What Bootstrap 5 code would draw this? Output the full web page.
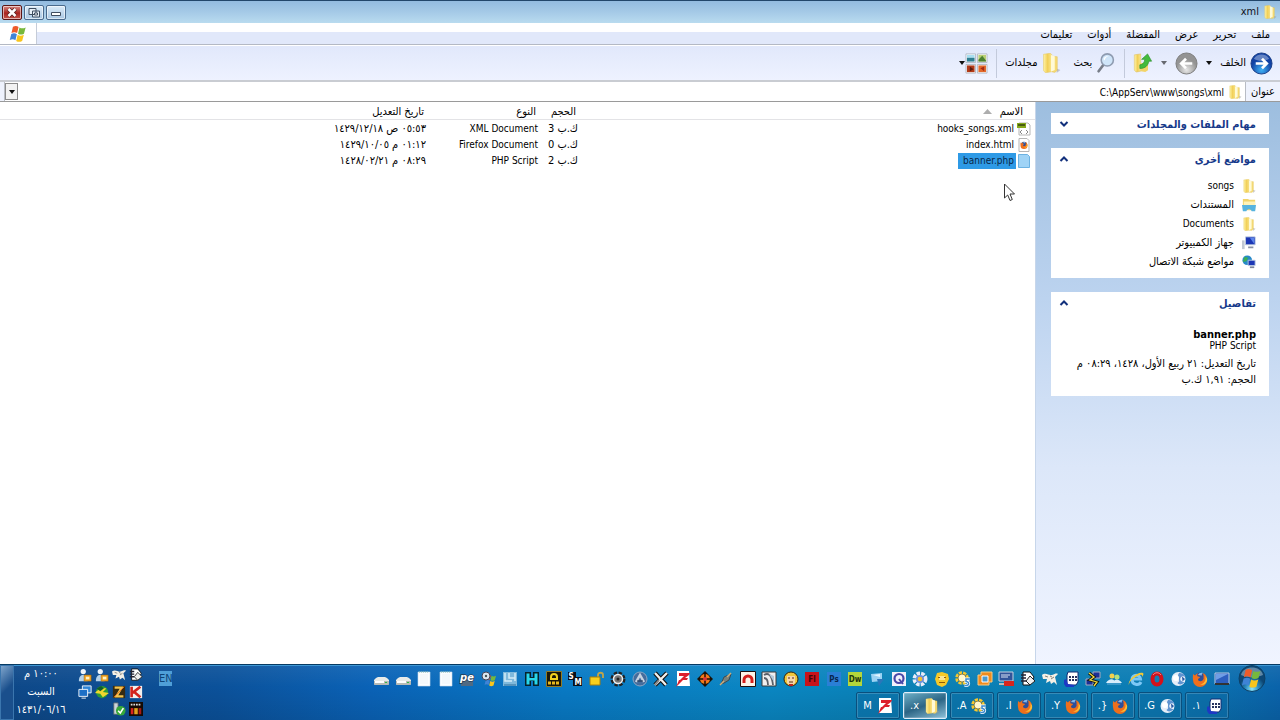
<!DOCTYPE html>
<html lang="ar" dir="rtl">
<head>
<meta charset="utf-8">
<meta name="viewport" content="width=device-width, initial-scale=1">
<title>xml</title>
<link rel="stylesheet" href="https://cdn.jsdelivr.net/npm/bootstrap@5.3.0/dist/css/bootstrap.min.css">
<style>
body{font-family:"DejaVu Sans Condensed","DejaVu Sans",sans-serif;font-stretch:condensed;font-size:11px;line-height:16px;color:#000;background:#fff}
svg{flex:none;display:block}
button{font:inherit;color:inherit;background:none;border:0;padding:0}
.en{font-size:10px}
.i12{width:12px;height:12px}.i14{width:14px;height:14px}.i16{width:16px;height:16px}.i18{width:18px;height:18px}.i20{width:20px;height:20px}.i24{width:23px;height:23px}
.titlebar{height:23px;border-top:1px solid #22466b;background:linear-gradient(#93bbe0,#a3c8e6 45%,#b9dbef);padding:0 3px 0 2px}
.titlebar h1{font-size:11px;line-height:16px;margin:0;color:#112}
.wbtn{width:20px;height:15px;border:1px solid #4a6a8c;border-radius:2px;background:linear-gradient(#dcebf8,#a9c8e4);box-shadow:inset 0 0 0 1px #ffffff90}
.wbtn.close-x{background:linear-gradient(#d98a84,#a8241f 55%,#c4564c);border-color:#5c1616}
.wbtns{gap:2px}
.menubar{height:22px;background:linear-gradient(#fff 9px,#e1e8fa 9px);border-bottom:1px solid #b4b9c4}
.menubar a{color:#000;text-decoration:none;padding:4px 0 0}
.menubar nav{gap:15px;padding-right:10px}
.flagcell{width:37px;background:#fff;border-right:1px solid #c5ccd8}
.tools{height:35px;background:linear-gradient(#e1e8fb,#eef2ff);border-top:1px solid #fff;padding:0 7px 0 0}
.tools button{display:flex;align-items:center}
.vr-line{width:1px;height:29px;background:#c3cadb}
.caret{width:0;height:0;border:3px solid transparent;border-top:4px solid #111;border-bottom:0}
.caret.dim{opacity:.6}
.addr{height:22px;border-top:2px solid #c9ccd2;border-bottom:1px solid #9a9a9a;background:#eef2fd;padding-left:4px}
.addr label{width:34px;text-align:center;padding-top:2px}
.addr .field{border:1px solid #b8bcc4;border-width:0 1px;background:#fff;padding-right:3px}
.addr input{border:0;outline:0;min-width:0;padding:2px 0 0;direction:rtl;font-size:10px;color:#000}
.dropb{width:13px;height:17px;border:1px solid #8b8b8b;background:#f2f2f2}
.files{table-layout:fixed;border-collapse:collapse}
.files th{font-weight:400;line-height:15px;padding:2px 6px 0 0;border-bottom:1px solid #e3e3e6}
.files td{height:16px;padding:0 4px 0 0;white-space:nowrap}
.files tbody::before{content:"";display:block;height:1px}
.fname{gap:1px}
.fname span{padding:0 2px 0 5px}
.picked span{background:#2e9ae6;color:#0b2748}
.side{width:245px;border-left:1px solid #c7d6ea;background:linear-gradient(#9dbedf,#bcd3ef 35%,#dce7f9 65%,#f0f4ff);padding:11px 11px 11px 15px;gap:14px}
.pane{background:#fff;padding:0 13px 0 7px}
.pane h2{font-size:11px;line-height:18px;padding-top:3px;font-weight:700;color:#173a8a;margin:0}
.pane ul{margin:0;padding:7px 0}
.pane li{height:19px;display:flex;align-items:center;gap:8px}
.pane a{color:#000;text-decoration:none}
.kind{line-height:12px}
.taskbar{height:56px;border-top:1px solid #063a63;box-shadow:inset 0 1px #3f97d4;background:linear-gradient(#ffffff10,#0000 40%,#00000018),linear-gradient(90deg,#0e4888,#0b519a 17%,#0a62b6 29%,#0879c4 44%,#0a86c2 60%,#0a80b4 72%,#0b7cb4 90%,#0a63aa);color:#fff}
.startcell{width:50px;padding:0 14px 0 0}
.quick{width:857px;height:27px}
.jobs{gap:3px;padding-right:1px}
.jobs button{width:44px;height:27px;border:1px solid #0a4f7d;box-shadow:inset 0 0 0 1px #ffffff2e;background:#0b6aa280;border-radius:2px;display:flex;align-items:center;justify-content:center;gap:5px}
.jobs .now{border-color:#dfeefa;background:linear-gradient(160deg,#6db0c8,#2c6585 50%,#8fc2da)}
.lang{width:13px;height:15px;background:#4f9fd8;color:#0d4377;line-height:15px;overflow:hidden;direction:ltr;margin-top:6px}
.tray{display:grid;grid-template-columns:repeat(4,14px);gap:3px;direction:ltr;padding-top:3px}
.clock{width:54px;line-height:18px;text-align:center;margin-right:10px}
.peek{width:14px;border:1px solid #3b76ae;background:linear-gradient(135deg,#7fa5cc,#1a4f8c 45%)}
.pointer{position:absolute;left:1003px;top:183px}
</style>
</head>
<body class="d-flex flex-column min-vh-100">
<svg width="0" height="0" class="position-absolute" aria-hidden="true">
<defs>
<linearGradient id="gy" x2="1"><stop stop-color="#fff3a6"/><stop offset=".5" stop-color="#f1cf57"/><stop offset="1" stop-color="#fbe68c"/></linearGradient>
<radialGradient id="gb" cy=".8"><stop stop-color="#3fb2f5"/><stop offset="1" stop-color="#1242a4"/></radialGradient>
<radialGradient id="gg" cy=".8"><stop stop-color="#e8e8e8"/><stop offset="1" stop-color="#939393"/></radialGradient>
<radialGradient id="go" cy=".9"><stop stop-color="#8fe8fb"/><stop offset=".5" stop-color="#2b8cbf"/><stop offset="1" stop-color="#0d4775"/></radialGradient>
<symbol id="folder" viewBox="0 0 16 16"><path d="M2 1l5.500-.8 1 1V15l-5 .8L2 14z" fill="url(#gy)" stroke="#e3c45c" stroke-width=".4"/><path d="M8.500 2.500l4.500.5v11l-2 1.500L8.500 15z" fill="#f5da74" stroke="#e0bf55" stroke-width=".4"/><path d="M8 1.500l3 1v11L8 15z" fill="#fffad6"/><path d="M13 12.500l2.500 1-3 2.500z" fill="#999" opacity=".5"/></symbol>
<symbol id="flag" viewBox="0 0 16 16"><path d="M3.500 1.500c2-1 3.500-.8 5 .2L7.200 7.200c-1.500-1-3-1.200-5-.2z" fill="#ee5b2a"/><path d="M9.300 2.200c1.700 1 3.400 1 5.500 0L13.300 7.700c-2 1-3.700 1-5.300 0z" fill="#77b83c"/><path d="M2 8c2-1 3.500-.8 5 .2l-1.300 5.300c-1.500-1-3-1.200-5-.2z" fill="#3f83d6"/><path d="M7.700 8.700c1.700 1 3.400 1 5.500 0L11.700 14.200c-2 1-3.700 1-5.300 0z" fill="#f8c51c"/></symbol>
<symbol id="ff" viewBox="0 0 16 16"><circle cx="8" cy="7.500" r="6" fill="#2d4f9a"/><path d="M6 4c1-2 3-2.500 5-2-1 .5-1.500 1.500-1 2.500z" fill="#7fb8ea"/><path d="M1 3l2 1.500C4 3 5 2.500 6 2.500c-1 1-1 2-.5 2.700L8 6c0 1-2 1.500-2 2.500 0 1.500 2 2 3.500 1.500C11 9.500 12 8 11.500 6 12 4.500 11 3 10.500 2c3 1 5 4 4.500 7a7 7 0 0 1-14 0C.6 7 1 5 1 3z" fill="#ee6f1c"/><path d="M13 5c2 4-1 8-5 8.500 5 1.500 8-3 7-6z" fill="#f9bf35"/></symbol>
<symbol id="sea" viewBox="0 0 16 16"><circle cx="7.500" cy="8" r="7" fill="#e6eef8"/><path d="M8 2c4-.5 6 2 6.500 4-2-1-4-1-5 1s1 4 4 4c-2 3-6 3-7 1 2-1 2-3 1-4s-1-4 .5-6z" fill="#5f93d0"/><circle cx="5" cy="7" r="3" fill="#fff"/><path d="M11 5.500l3 2.500-2.500 2.500z" fill="#2b5ba5"/></symbol>
<symbol id="keypad" viewBox="0 0 16 16"><path d="M5 1h10v10l-2 3H4V4z" fill="#fff" stroke="#112a72"/><path d="M6 5h2v2H6zm3 0h2v2H9zm3 0h2v2h-2zM6 8h2v2H6zm3 0h2v2H9zm3 0h2v2h-2z" fill="#27335e"/><path d="M1 9l2-1 2 5 6 1v2H3l-2-3z" fill="#1c39c4"/></symbol>
<symbol id="gear5" viewBox="0 0 16 16"><circle cx="7" cy="7" r="5" fill="none" stroke="#f6c82f" stroke-width="3.500" stroke-dasharray="3 1"/><circle cx="7" cy="7" r="4" fill="#fff7ce" stroke="#6b5510" stroke-width=".7"/><path d="M15 8h-4v2.500c3 0 4 4 0 4H9.500" fill="none" stroke="#fff" stroke-width="3"/><path d="M15 8h-4v2.500c3 0 4 4 0 4H9.500" fill="none" stroke="#3a8bd0" stroke-width="1.500"/></symbol>
<symbol id="fz" viewBox="0 0 16 16"><path d="M2 0h12l1 15H2z" fill="#fff"/><path d="M4 2h11l-1 2-4 3h3l-1 2H8L1 16l3-7h1l4-4H4z" fill="#dc1f2c"/></symbol>
<symbol id="drive" viewBox="0 0 16 16"><path d="M3 7l2-1h7l2 1 2 2v4l-1 1H2l-1-1V9z" fill="#e9ebe8"/><path d="M1 10h15v3l-1 1H2l-1-1z" fill="#b8bbb6"/><path d="M2 10h9v2H2z" fill="#fff"/><path d="M12 11h2v1h-2z" fill="#3b4"/></symbol>
<symbol id="page" viewBox="0 0 16 16"><path d="M2 1h12v14H2z" fill="#fbfdff" stroke="#cdddec" stroke-width=".6"/><path d="M4 4h8M4 6h8M4 8h8M4 10h8M4 12h8" stroke="#e8eef5" stroke-width=".7"/><path d="M3 1h10" stroke="#8ba" stroke-dasharray="1 1"/></symbol>
<symbol id="gearb" viewBox="0 0 16 16"><circle cx="8" cy="8" r="5.500" fill="none" stroke="#222" stroke-width="4" stroke-dasharray="3 1.300"/><circle cx="8" cy="8" r="4.500" fill="#777" stroke="#eee" stroke-width="1.500"/><circle cx="8" cy="8" r="1.500" fill="#222"/></symbol>
<symbol id="note" viewBox="0 0 16 16"><path d="M3 1h7l4 5-4 8H3z" fill="#fff" stroke="#111"/><path d="M1 4h5M1 7h5M1 10h5" stroke="#223" stroke-width="1.500"/><path d="M10 5l5 5-5 4-4-4z" fill="#eee" stroke="#222"/></symbol>
<symbol id="fish" viewBox="0 0 16 16"><path d="M0 4c4-3 7 1 10 0s4-2 6-1l-3 3 2 8-3-3-3 2-1-3-4 2 1-4-4 0z" fill="#f4f0e6"/><path d="M3 5l3 1M9 8l3-2M8 5l2 1" stroke="#88837a"/></symbol>
<symbol id="man" viewBox="0 0 16 16"><circle cx="6" cy="4" r="3" fill="#eef5fb"/><path d="M1 15c0-5 2-7 5-7s5 2 5 7z" fill="#b4d2ea"/><path d="M7 8h8v7H7z" fill="#f0a627" stroke="#9c5d08" stroke-width=".6"/><path d="M9 10h4v3H9z" fill="#fff1c4"/></symbol>
<symbol id="mon" viewBox="0 0 16 16"><path d="M4 1h11v9H4z" fill="#1c37b5" stroke="#b9c8df"/><path d="M9 2h5v7z" fill="#5c84ea"/><path d="M7 12h6v2H7z" fill="#8a93a5"/><path d="M0 5h3v10H0z" fill="#c1c8d3"/></symbol>
<symbol id="net" viewBox="0 0 16 16"><circle cx="6" cy="6" r="5.500" fill="#2789c9"/><path d="M3 2l4 1-2 4-4 1zM7 6l3 2-2 3z" fill="#3caf54"/><path d="M7 6h8v6H7z" fill="#1c37b5" stroke="#bccbe2"/><path d="M9 13h5v2H9z" fill="#7d879b"/></symbol>
</defs>
</svg>

<header class="titlebar d-flex align-items-center justify-content-between">
  <div class="d-flex align-items-center gap-1"><svg class="i14"><use href="#folder"/></svg><h1>xml</h1></div>
  <div class="wbtns d-flex" dir="ltr">
    <button class="wbtn close-x" aria-label="إغلاق"><svg width="18" height="13" viewBox="0 0 18 13"><path d="M5.500 3l7 7m0-7l-7 7" stroke="#522" stroke-width="4"/><path d="M5.500 3l7 7m0-7l-7 7" stroke="#fff" stroke-width="2.500"/></svg></button>
    <button class="wbtn" aria-label="استعادة"><svg width="18" height="13" viewBox="0 0 18 13"><path d="M4 2.500h7v6H4zM7.500 5h7v6h-7z" fill="#e8f0f8" stroke="#3f4d60"/><path d="M9.500 7h3v2h-3z" fill="#fff" stroke="#3f4d60"/></svg></button>
    <button class="wbtn" aria-label="تصغير"><svg width="18" height="13" viewBox="0 0 18 13"><path d="M4.500 6.500h9v3h-9z" fill="#fff" stroke="#3f4d60"/></svg></button>
  </div>
</header>

<div class="menubar d-flex justify-content-between">
  <nav class="d-flex"><a href="#">ملف</a><a href="#">تحرير</a><a href="#">عرض</a><a href="#">المفضلة</a><a href="#">أدوات</a><a href="#">تعليمات</a></nav>
  <div class="flagcell d-flex align-items-center justify-content-center"><svg class="i18"><use href="#flag"/></svg></div>
</div>

<div class="tools d-flex align-items-center gap-2">
  <button class="gap-1"><svg class="i24" viewBox="0 0 24 24"><circle cx="12" cy="12" r="11" fill="url(#gb)" stroke="#1b3f86"/><path d="M4 7c3-6 13-6 16 0-5 3-11 3-16 0z" fill="#fff" opacity=".35"/><path d="M6 12h11M12.500 7l5 5-5 5" fill="none" stroke="#fff" stroke-width="2.800"/></svg>الخلف</button>
  <span class="caret"></span>
  <button aria-label="الأمام"><svg class="i24" viewBox="0 0 24 24"><circle cx="12" cy="12" r="11" fill="url(#gg)" stroke="#7c7c7c"/><path d="M18 12H7M11.500 7l-5 5 5 5" fill="none" stroke="#fff" stroke-width="2.800"/></svg></button>
  <span class="caret dim"></span>
  <button aria-label="أعلى"><svg class="i20" viewBox="2 1 21 22"><path d="M3 3l7-1v19l-5 1-2-2z" fill="url(#gy)" stroke="#dcb94d" stroke-width=".5"/><path d="M10 12h8v8l-3 2-5-1z" fill="#f3d467"/><path d="M9 14c3 0 5-2 5.500-6L11 8l6.500-6L22 10h-3c-1 5-4 8-10 8z" fill="#43bb3d" stroke="#2a8f2c" stroke-width=".7"/></svg></button>
  <span class="vr-line"></span>
  <button class="gap-1"><svg class="i20" viewBox="2 1 21 23"><path d="M10 14l-6 8" stroke="#777d88" stroke-width="3" stroke-linecap="round"/><circle cx="14" cy="9" r="7" fill="#cfe5f9" stroke="#8e9bb0" stroke-width="1.800"/><path d="M9.500 8c1-3 4-4 6-3.500-3 1-4 3-4.500 5z" fill="#fff"/></svg>بحث</button>
  <button class="gap-1 me-1"><svg class="i20"><use href="#folder"/></svg>مجلدات</button>
  <span class="vr-line"></span>
  <button aria-label="طرق العرض"><svg class="i24" viewBox="0 0 24 24"><path d="M1 2h10v9H1zM13 2h10v9H13zM1 13h10v9H1zM13 13h10v9H13z" fill="#fff" stroke="#a6adb8" stroke-width=".8"/><path d="M2 3h8v3H2z" fill="#a9dff2"/><path d="M2 6h8v4H2z" fill="#2f7f92"/><path d="M14 3h8v7h-8z" fill="#b9cf74"/><path d="M14 8l4-4 4 5v1h-8z" fill="#4c8132"/><path d="M2 14h8v7H2z" fill="#b23a18"/><path d="M5 15l4 3-4 2z" fill="#5b1d10"/><path d="M14 14h8v7h-8z" fill="#e3692b"/><path d="M16 17l4-2v5z" fill="#a52a16"/></svg><span class="caret"></span></button>
</div>

<div class="addr d-flex">
  <label for="path">عنوان</label>
  <div class="field d-flex flex-fill align-items-center">
    <svg class="i14"><use href="#folder"/></svg>
    <input id="path" class="flex-fill pe-1" value="C:\AppServ\www\songs\xml">
    <button class="dropb d-flex align-items-center justify-content-center" aria-label="القائمة"><span class="caret"></span></button>
  </div>
</div>

<main class="d-flex flex-fill">
  <aside class="side d-flex flex-column flex-shrink-0">
    <section class="pane"><div class="d-flex justify-content-between align-items-center"><h2>مهام الملفات والمجلدات</h2><svg class="i12" viewBox="0 0 12 12"><path d="M2.500 4L6 7.500 9.500 4" fill="none" stroke="#12307c" stroke-width="2"/></svg></div></section>
    <section class="pane">
      <div class="d-flex justify-content-between align-items-center"><h2>مواضع أخرى</h2><svg class="i12" viewBox="0 0 12 12"><path d="M2.500 8L6 4.500 9.500 8" fill="none" stroke="#12307c" stroke-width="2"/></svg></div>
      <ul class="list-unstyled">
        <li><svg class="i14"><use href="#folder"/></svg><a href="#" class="en">songs</a></li>
        <li><svg class="i14" viewBox="0 0 16 16"><path d="M1 1h6l1 1h7v12H1z" fill="#f0d36b"/><path d="M2 4h13v4H2z" fill="#fff3b8"/><path d="M0 8h16l-1 7h-4c-1-3-5-3-6 0H1z" fill="#56b3df"/></svg><a href="#">المستندات</a></li>
        <li><svg class="i14"><use href="#folder"/></svg><a href="#" class="en">Documents</a></li>
        <li><svg class="i14"><use href="#mon"/></svg><a href="#">جهاز الكمبيوتر</a></li>
        <li><svg class="i14"><use href="#net"/></svg><a href="#">مواضع شبكة الاتصال</a></li>
      </ul>
    </section>
    <section class="pane pb-2">
      <div class="d-flex justify-content-between align-items-center"><h2>تفاصيل</h2><svg class="i12" viewBox="0 0 12 12"><path d="M2.500 8L6 4.500 9.500 8" fill="none" stroke="#12307c" stroke-width="2"/></svg></div>
      <div class="pt-3"><strong class="d-block lh-1">banner.php</strong><div class="en kind mb-1">PHP Script</div>
      <div>تاريخ التعديل: ٢١ ربيع الأول، ١٤٢٨، ٠٨:٢٩ م</div><div>الحجم: ١,٩١ ك.ب</div></div>
    </section>
  </aside>
  <div class="flex-fill">
    <table class="files w-100">
      <colgroup><col style="width:453px"><col style="width:40px"><col style="width:112px"><col></colgroup>
      <thead><tr><th class="pe-2"><span class="d-flex align-items-center gap-2 pe-1">الاسم<svg width="9" height="5" viewBox="0 0 9 5"><path d="M0 5l4.500-5L9 5z" fill="#adadad"/></svg></span></th><th>الحجم</th><th>النوع</th><th>تاريخ التعديل</th></tr></thead>
      <tbody>
        <tr><td><div class="fname d-flex align-items-center"><svg class="i14" viewBox="0 0 14 14"><path d="M2 1h9l2 2v10H2z" fill="#fff" stroke="#b5b5b5"/><path d="M0 1h9v5H0z" fill="#86a91c"/><path d="M1 3h7" stroke="#33440c" stroke-width="1.500"/><path d="M5 8l-2 2 2 2m4-4l2 2-2 2" fill="none" stroke="#888"/></svg><span class="en">hooks_songs.xml</span></div></td><td>ك.ب 3</td><td class="en">XML Document</td><td>٠٥:٥٣ ص ١٤٢٩/١٢/١٨</td></tr>
        <tr><td><div class="fname d-flex align-items-center"><svg class="i14" viewBox="0 0 14 14"><path d="M2 .5h8l2 2v11H2z" fill="#fff" stroke="#b5b5b5"/><use href="#ff" x="3" y="3" width="8" height="8"/></svg><span class="en">index.html</span></div></td><td>ك.ب 0</td><td class="en">Firefox Document</td><td>٠١:١٢ م ١٤٢٩/١٠/٠٥</td></tr>
        <tr><td><div class="fname picked d-flex align-items-center"><svg class="i14" viewBox="0 0 14 14"><path d="M1.500 .5h9l2 2v11h-11z" fill="#9fd3f6" stroke="#6cb2e2"/></svg><span class="en">banner.php</span></div></td><td>ك.ب 2</td><td class="en">PHP Script</td><td>٠٨:٢٩ م ١٤٢٨/٠٢/٢١</td></tr>
      </tbody>
    </table>
  </div>
</main>
<svg class="pointer" width="13" height="19" viewBox="0 0 13 19"><path d="M1.500 1v14l3.200-3 2.300 5.500 2.300-1L7 11h4.500z" fill="#fff" stroke="#333"/></svg>

<footer class="taskbar d-flex">
  <div class="startcell d-flex justify-content-start"><button aria-label="ابدأ" class="align-self-start"><svg width="28" height="28" viewBox="0 0 28 28"><circle cx="14" cy="13.500" r="13" fill="url(#go)" stroke="#0c4067"/><path d="M3 10C5 0 23 0 25 10c-7 3-15 3-22 0z" fill="#fff" opacity=".35"/><use href="#flag" x="3" y="3" width="21" height="21"/></svg></button></div>
  <div class="flex-fill">
    <div class="quick d-flex justify-content-between align-items-center">
      <svg class="i16" viewBox="0 0 16 16"><path d="M1 2h14v11H1z" fill="#2d5fc0" stroke="#b9cce2"/><path d="M2 3h12L2 9z" fill="#6f9ee6"/><path d="M1 13h14" stroke="#333" stroke-width="2"/></svg>
      <svg class="i16"><use href="#ff"/></svg>
      <svg class="i16"><use href="#sea"/></svg>
      <svg class="i16" viewBox="0 0 16 16"><ellipse cx="8" cy="8" rx="4.500" ry="5.500" fill="none" stroke="#d3111b" stroke-width="4"/><path d="M4 4c2-3 6-3 8 0" stroke="#f08a8a" fill="none"/></svg>
      <svg class="i16" viewBox="0 0 16 16"><path d="M13 11c-2 4-9 3-9-2.500S12 3 12.500 8H5" fill="none" stroke="#7cc8f6" stroke-width="3"/><path d="M1 14C-1 10 9 0 15 2c1 1 0 3-1 4 1-4-4-2-8 1S1 12 1 14z" fill="#f4c935"/></svg>
      <svg class="i16" viewBox="0 0 16 16"><circle cx="6" cy="5" r="2.500" fill="#f6d04b"/><circle cx="11" cy="6" r="2.500" fill="#b6e07d"/><path d="M0 12c3-5 8-5 10 0zM7 12c2-5 6-4 9 0z" fill="#d8ecfa"/><path d="M1 13h14" stroke="#67aeda"/></svg>
      <svg class="i16" viewBox="0 0 16 16"><path d="M8 1h7v6H8zM1 8h7v6H1z" fill="#1b2f96" stroke="#aab"/><path d="M4 2l5 4-4 3 7 2-3 4" fill="none" stroke="#111" stroke-width="3"/><path d="M4 2l5 4-4 3 7 2-3 4" fill="none" stroke="#f3dc3c" stroke-width="1.300"/></svg>
      <svg class="i16"><use href="#keypad"/></svg>
      <svg class="i16"><use href="#fish"/></svg>
      <svg class="i16"><use href="#note"/></svg>
      <svg class="i16" viewBox="0 0 16 16"><path d="M1 1h14v9H1z" fill="#31549a" stroke="#c7d0df"/><path d="M3 4h9M3 6h7" stroke="#dbe4f5"/><path d="M6 10h10v5H6z" fill="#d8261e"/><path d="M1 12h5v2H1z" fill="#bbb"/></svg>
      <svg class="i16" viewBox="0 0 16 16"><path d="M4 1h11v10h-3v3H1V4h3z" fill="#ef8b1e" stroke="#f9cb82"/><path d="M5 5h6v6H5z" fill="#4b99cf" stroke="#fff"/></svg>
      <svg class="i16"><use href="#gear5"/></svg>
      <svg class="i16" viewBox="0 0 16 16"><path d="M8 1l6 2 1 5-3 6-4 2-5-2-2-6 2-6z" fill="#f7c928"/><path d="M5 5h6v4H5z" fill="#fbe596"/><path d="M4 6h2v1H4zm6 0h2v1h-2zM5 11h6v1H5z" fill="#8e5b08"/></svg>
      <svg class="i16" viewBox="0 0 16 16"><circle cx="8" cy="8" r="5" fill="none" stroke="#e8edf9" stroke-width="5" stroke-dasharray="3 1"/><circle cx="8" cy="8" r="4" fill="#6f8fdd"/><circle cx="8" cy="8" r="2.300" fill="#f5c12f"/></svg>
      <svg class="i16" viewBox="0 0 16 16"><path d="M1 1h14v14H1z" fill="#f1f1fb"/><circle cx="8" cy="7.500" r="4.500" fill="none" stroke="#4a48a8" stroke-width="2.200"/><path d="M8 8l4 5" stroke="#4a48a8" stroke-width="2"/></svg>
      <svg class="i16" viewBox="0 0 16 16"><path d="M2 3l11-1v8L3 11z" fill="#9cd3f4"/><path d="M8 8h7l-5 7z" fill="#2c76b9"/><path d="M4 4l7-1v3z" fill="#e3f5ff"/></svg>
      <svg class="i16" viewBox="0 0 16 16"><path d="M1 1h14v14H1z" fill="#b5d63a"/><text x="8" y="11" font-size="8" font-weight="700" text-anchor="middle" fill="#20330a" direction="ltr">Dw</text></svg>
      <svg class="i16" viewBox="0 0 16 16"><path d="M1 1h14v14H1z" fill="#2a7fd6"/><text x="8" y="11" font-size="8" font-weight="700" text-anchor="middle" fill="#08264d" direction="ltr">Ps</text></svg>
      <svg class="i16" viewBox="0 0 16 16"><path d="M1 1h14v14H1z" fill="#c8121b"/><text x="8" y="11" font-size="8" font-weight="700" text-anchor="middle" fill="#3d0508" direction="ltr">Fl</text></svg>
      <svg class="i16" viewBox="0 0 16 16"><circle cx="8" cy="8" r="7" fill="#f1c73b" stroke="#372307"/><path d="M4 5h8v7l-4 3-4-3z" fill="#f7d7ac"/><path d="M5 7h2m2 0h2M6 11h4" stroke="#5b2c10"/><path d="M6 13h4v2H6z" fill="#b22"/></svg>
      <svg class="i16" viewBox="0 0 16 16"><path d="M1 1h14v14H1z" fill="#efefef" stroke="#3b3b3b"/><path d="M3 4c5-3 8 1 9 10M3 7c3 0 4 3 4 7" fill="none" stroke="#5a5f67" stroke-width="1.800"/><path d="M8 3l5 2v6z" fill="#b4cbdc"/></svg>
      <svg class="i16" viewBox="0 0 16 16"><path d="M.5 .5h15v15H.5z" fill="#fdf4e8" stroke="#201010"/><path d="M4 12V9a4 4 0 0 1 8 0v3" fill="none" stroke="#d41f1c" stroke-width="3"/></svg>
      <svg class="i16" viewBox="0 0 16 16"><path d="M3 13l3-7 7-3-2 6-5 3z" fill="#78817b" stroke="#3a4a52"/><path d="M9 6l4-4M2 14l4-4" stroke="#cfae7a" stroke-width="1.500"/></svg>
      <svg class="i16" viewBox="0 0 16 16"><path d="M8 0l8 8-8 8-8-8z" fill="#1c1005"/><circle cx="8" cy="8" r="5" fill="#ef7b1b"/><path d="M8 1v14M1 8h14" stroke="#1c1005" stroke-width="1.500"/><circle cx="8" cy="8" r="2" fill="#d33"/></svg>
      <svg class="i16"><use href="#fz"/></svg>
      <svg class="i16" viewBox="0 0 16 16"><path d="M2 2l11 12M14 2L2 14" stroke="#111" stroke-width="4.500"/><path d="M2 2l11 12M14 2L2 14" stroke="#f1f1ee" stroke-width="2.300"/><path d="M2 14l4-5" stroke="#888" stroke-width="2"/></svg>
      <svg class="i16" viewBox="0 0 16 16"><circle cx="8" cy="8" r="7" fill="#456c9c" stroke="#8ca5c2"/><path d="M4 11l4-7 4 7" fill="none" stroke="#c6d2e0" stroke-width="2.500"/><path d="M5 10h6" stroke="#1b2f4c"/></svg>
      <svg class="i16"><use href="#gearb"/></svg>
      <svg class="i16" viewBox="0 0 16 16"><path d="M9 7V4c0-3 5-3 5 0v3" fill="none" stroke="#c2a548" stroke-width="1.800"/><path d="M1 6h10v8H1z" fill="#f8cf1c" stroke="#a87f08"/></svg>
      <svg class="i16" viewBox="0 0 16 16"><path d="M1 1h8v5h6v9H6V9H1z" fill="#0a0f18"/><text x="4" y="8" font-size="8" font-weight="700" text-anchor="middle" fill="#fff">S</text><text x="11" y="14" font-size="8" font-weight="700" text-anchor="middle" fill="#fff">M</text></svg>
      <svg class="i16" viewBox="0 0 16 16"><path d="M.5 .5h15v15H.5z" fill="#1a1608" stroke="#927b24"/><path d="M5 8V6a3 3 0 0 1 6 0v2z" fill="none" stroke="#f2d21f" stroke-width="2"/><path d="M2 12h12" stroke="#e8b81c" stroke-width="3" stroke-dasharray="3 1"/></svg>
      <svg class="i16" viewBox="0 0 16 16"><path d="M1 1h6v5h2V1h6v14H9v-5H7v5H1z" fill="#06232b"/><path d="M2.500 2.500h3v4.500h5V2.500h3v11h-3v-4h-5v4h-3z" fill="#28d6e9"/></svg>
      <svg class="i16" viewBox="0 0 16 16"><path d="M1 1h14v14H1z" fill="#7fb9dc"/><path d="M3 2v8h7M7 2v5h6M13 2v8" fill="none" stroke="#d4ecf8" stroke-width="1.500"/><path d="M2 14h12" stroke="#2f6f9b"/></svg>
      <svg class="i16" viewBox="0 0 16 16"><use href="#flag" x="3" y="3" width="13" height="13"/><circle cx="5" cy="5" r="4" fill="#dbe7f1" stroke="#445"/><circle cx="5" cy="5" r="1.200" fill="#455"/></svg>
      <svg class="i16" viewBox="0 0 16 16"><path d="M2 8h12v7H2z" fill="#506a83"/><text x="8" y="10" font-size="11" font-weight="700" font-style="italic" text-anchor="middle" fill="#fff" stroke="#24394f" stroke-width="1.500" paint-order="stroke" direction="ltr">pe</text></svg>
      <svg class="i16"><use href="#page"/></svg>
      <svg class="i16"><use href="#page"/></svg>
      <svg class="i16"><use href="#drive"/></svg>
      <svg class="i16"><use href="#drive"/></svg>
    </div>
    <div class="jobs d-flex">
      <button><svg class="i16"><use href="#keypad"/></svg>١.</button>
      <button><svg class="i16"><use href="#sea"/></svg>G.</button>
      <button><svg class="i16"><use href="#ff"/></svg>{.</button>
      <button><svg class="i16"><use href="#ff"/></svg>Y.</button>
      <button><svg class="i16"><use href="#ff"/></svg>I.</button>
      <button><svg class="i16"><use href="#gear5"/></svg>A.</button>
      <button class="now"><svg class="i16"><use href="#folder"/></svg>x.</button>
      <button><svg class="i16"><use href="#fz"/></svg>M</button>
    </div>
  </div>
  <div class="lang ms-3" id="lang">EN</div>
  <div class="d-flex align-items-start">
    <div class="tray">
      <svg class="i14"><use href="#man"/></svg>
      <svg class="i14"><use href="#man"/></svg>
      <svg class="i14"><use href="#fish"/></svg>
      <svg class="i14"><use href="#note"/></svg>
      <svg class="i14" viewBox="0 0 16 16"><path d="M5 1h10v8H5z" fill="#2f86d8" stroke="#fff"/><path d="M1 5h10v8H1z" fill="#1c6fc6" stroke="#fff"/><path d="M4 15h5" stroke="#fff"/></svg>
      <svg class="i14" viewBox="0 0 16 16"><circle cx="8" cy="8" r="7" fill="#2a9a38"/><path d="M0 9c3-4 8-6 13-5l-4 4 7 1-7 5-3-4z" fill="#efd62e"/><path d="M2 4l5-3 3 3-4 3z" fill="#135c2b"/></svg>
      <svg class="i14" viewBox="0 0 16 16"><path d="M1 1h14v14H1z" fill="#362b12"/><path d="M3 3h8L5 13h8" fill="none" stroke="#f1c44f" stroke-width="2.500"/><path d="M2 14L14 2" stroke="#ef6d1b"/></svg>
      <svg class="i14" viewBox="0 0 16 16"><path d="M1 1h14v14H1z" fill="#f2f0ee"/><path d="M3 2v12M4 9l9-7M6 8l7 6" stroke="#d3221c" stroke-width="3"/></svg>
      <span></span><span></span>
      <svg class="i14" viewBox="0 0 16 16"><path d="M2 1h5v13H2z" fill="#ccd5d9" stroke="#53616b"/><circle cx="10" cy="10" r="5.500" fill="#36a839"/><path d="M7 10l2.500 2.500L13 7" fill="none" stroke="#fff" stroke-width="1.800"/></svg>
      <svg class="i14" viewBox="0 0 16 16"><path d="M0 0h16v16H0z" fill="#150a04"/><path d="M2 3h12" stroke="#ddd" stroke-width="2" stroke-dasharray="2 1"/><path d="M2 7h3v7H2z" fill="#d8241c"/><path d="M6 7h4v7H6z" fill="#e3a51e"/><path d="M11 7h3v7h-3z" fill="#a81a14"/></svg>
    </div>
    <div class="clock"><div>١٠:٠٠ م</div><div>السبت</div><div>١٤٣١/٠٦/١٦</div></div>
  </div>
  <button class="peek" aria-label="سطح المكتب"></button>
</footer>
<script src="https://cdn.jsdelivr.net/npm/bootstrap@5.3.0/dist/js/bootstrap.bundle.min.js"></script>
</body>
</html>
